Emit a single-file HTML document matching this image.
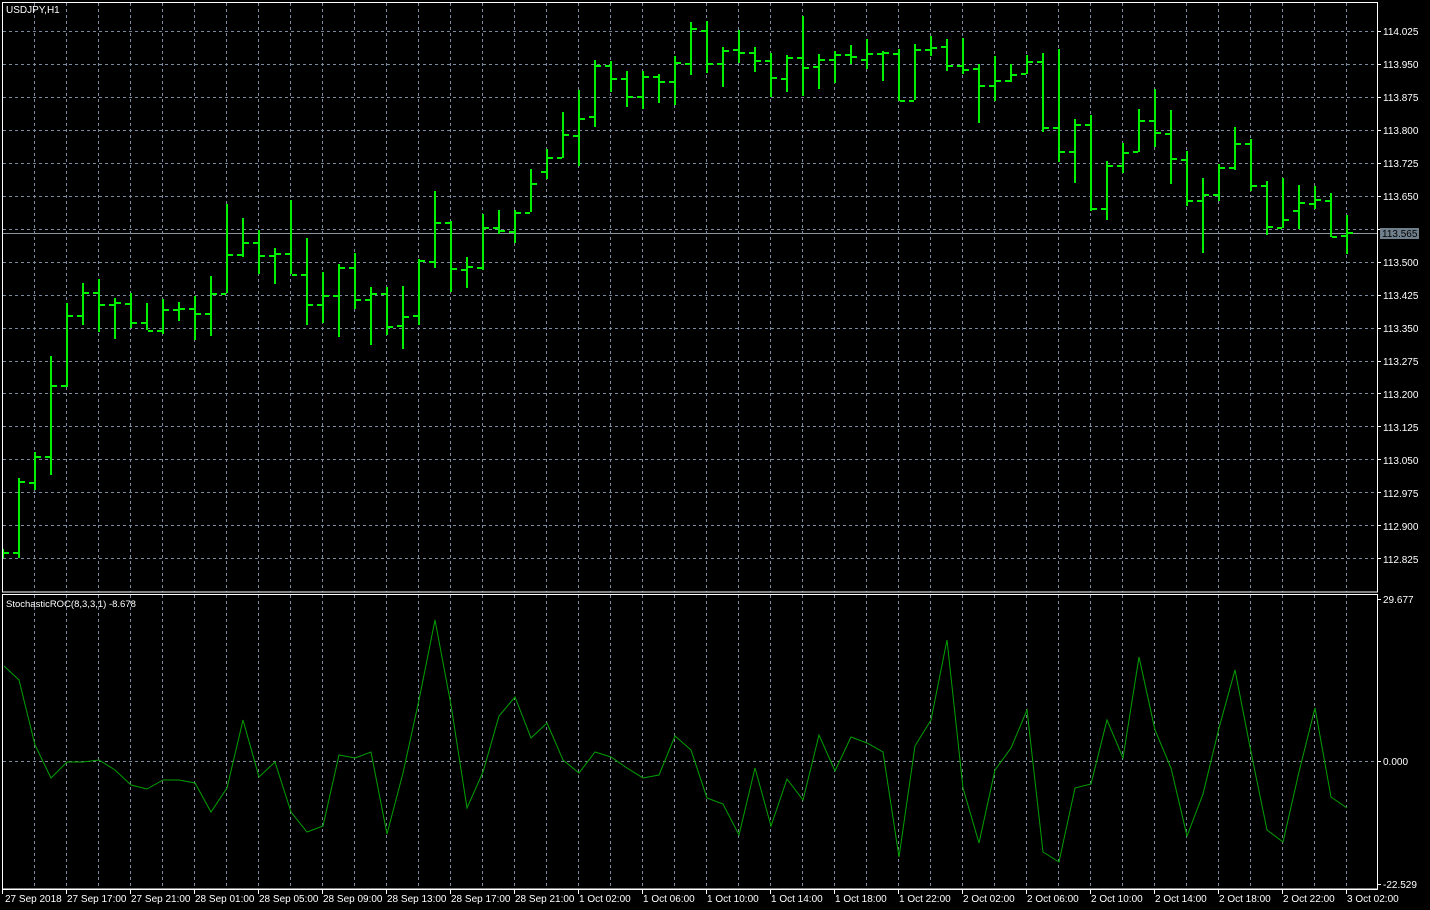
<!DOCTYPE html>
<html><head><meta charset="utf-8"><style>
html,body{margin:0;padding:0;background:#000;width:1430px;height:910px;overflow:hidden}
svg{display:block}
text{font-family:"Liberation Sans",sans-serif;font-size:10px;fill:#fff}
</style></head><body>
<svg id="s" width="1430" height="910" xmlns="http://www.w3.org/2000/svg" shape-rendering="crispEdges">
<g id="grid" stroke="#7b8a9c" stroke-width="1" stroke-dasharray="3,3"></g>
<line x1="2" y1="233.5" x2="1377" y2="233.5" stroke="#8a95a0"/>
<g id="bars" fill="#00f000"></g>
<polyline id="ind" fill="none" stroke="#00a000" stroke-width="1" shape-rendering="auto"/>
<g fill="none" stroke="#fff" stroke-width="1">
<rect x="2.5" y="2.5" width="1375" height="589.5"/>
<rect x="2.5" y="594.5" width="1375" height="294.5"/>
</g>
<g id="ticks" stroke="#fff"></g>
<text x="6" y="13">USDJPY,H1</text>
<text x="6" y="607" style="font-size:9.5px">StochasticROC(8,3,3,1) -8.678</text>
<g>
<text x="1383" y="35">114.025</text><text x="1383" y="68">113.950</text><text x="1383" y="101">113.875</text><text x="1383" y="134">113.800</text><text x="1383" y="167">113.725</text><text x="1383" y="200">113.650</text><text x="1383" y="266">113.500</text><text x="1383" y="299">113.425</text><text x="1383" y="332">113.350</text><text x="1383" y="365">113.275</text><text x="1383" y="398">113.200</text><text x="1383" y="431">113.125</text><text x="1383" y="464">113.050</text><text x="1383" y="497">112.975</text><text x="1383" y="530">112.900</text><text x="1383" y="563">112.825</text>
</g>
<rect x="1380" y="228" width="39" height="11" fill="#707f8c"/>
<text x="1382" y="237" style="fill:#000">113.565</text>
<text x="1383" y="603">29.677</text>
<text x="1383" y="765">0.000</text>
<text x="1383" y="888">-22.529</text>
<g style="font-size:9.5px">
<text x="5" y="902">27 Sep 2018</text><text x="67" y="902">27 Sep 17:00</text><text x="131" y="902">27 Sep 21:00</text><text x="195" y="902">28 Sep 01:00</text><text x="259" y="902">28 Sep 05:00</text><text x="323" y="902">28 Sep 09:00</text><text x="387" y="902">28 Sep 13:00</text><text x="451" y="902">28 Sep 17:00</text><text x="515" y="902">28 Sep 21:00</text><text x="579" y="902">1 Oct 02:00</text><text x="643" y="902">1 Oct 06:00</text><text x="707" y="902">1 Oct 10:00</text><text x="771" y="902">1 Oct 14:00</text><text x="835" y="902">1 Oct 18:00</text><text x="899" y="902">1 Oct 22:00</text><text x="963" y="902">2 Oct 02:00</text><text x="1027" y="902">2 Oct 06:00</text><text x="1091" y="902">2 Oct 10:00</text><text x="1155" y="902">2 Oct 14:00</text><text x="1219" y="902">2 Oct 18:00</text><text x="1283" y="902">2 Oct 22:00</text><text x="1347" y="902">3 Oct 02:00</text>
</g>
</svg>
<script>
var NS="http://www.w3.org/2000/svg";
function el(p,t,a){var e=document.createElementNS(NS,t);for(var k in a)e.setAttribute(k,a[k]);p.appendChild(e);return e;}
var g=document.getElementById('grid');
for(var x=34;x<1377;x+=32){el(g,'line',{x1:x+.5,y1:3,x2:x+.5,y2:592});el(g,'line',{x1:x+.5,y1:595,x2:x+.5,y2:889});}
for(var i=0;i<18;i++){var y=Math.round(31+i*32.95)+.5;if(y>591)break;el(g,'line',{x1:3,y1:y,x2:1377,y2:y});}
el(g,'line',{x1:3,y1:761.5,x2:1377,y2:761.5});
var t=document.getElementById('ticks');
for(var i=0;i<17;i++){var y=Math.round(31+i*32.95)+.5;el(t,'line',{x1:1377,y1:y,x2:1381,y2:y});}
[599.5,761.5,884.5].forEach(function(y){el(t,'line',{x1:1377,y1:y,x2:1381,y2:y});});
el(t,'line',{x1:2,y1:889.5,x2:1378,y2:889.5});
for(var x=2;x<1377;x+=64){el(t,'line',{x1:x+.5,y1:889,x2:x+.5,y2:894});}
// bars: x,high,low,open,close
var B=[[2,549,558,552,552],[18,478,558,552,481],[34,452,490,482,456],[50,356,475,456,385],[66,303,387,385,315],[82,283,325,315,292],[98,279,332,292,304],[114,298,339,304,302],[130,293,328,303,322],[146,303,330,322,330],[162,299,334,330,309],[178,302,321,309,308],[194,296,340,308,313],[210,276,336,313,293],[226,204,293,293,254],[242,218,257,254,242],[258,230,274,242,255],[274,248,284,255,253],[290,200,274,253,274],[306,238,325,274,304],[322,272,323,304,295],[338,264,337,295,267],[354,253,309,267,299],[370,287,345,299,293],[386,287,335,293,326],[402,286,349,325,316],[418,259,325,315,260],[434,191,268,261,222],[450,221,292,222,268],[466,257,288,269,266],[482,214,270,267,227],[498,210,234,227,230],[514,210,243,231,212],[530,169,212,212,183],[546,149,179,171,157],[562,112,158,157,134],[578,90,166,135,118],[594,60,127,116,65],[610,61,92,65,78],[626,71,107,78,96],[642,71,109,96,76],[658,74,103,76,81],[674,56,105,81,62],[690,22,75,63,28],[706,21,73,30,63],[722,47,87,63,50],[738,30,63,49,52],[754,47,72,52,60],[770,53,97,60,77],[786,55,92,78,57],[802,16,96,57,67],[818,54,89,66,59],[834,51,83,59,54],[850,45,64,54,56],[866,39,69,59,53],[882,51,81,53,52],[898,49,101,53,100],[914,44,100,100,49],[930,36,56,49,47],[946,39,71,46,65],[962,38,74,65,69],[978,64,123,68,85],[994,56,101,85,80],[1010,64,82,80,74],[1026,55,74,73,61],[1042,53,132,61,127],[1058,49,162,127,151],[1074,119,183,151,124],[1090,115,211,124,208],[1106,161,220,208,165],[1122,143,173,165,152],[1138,109,152,151,120],[1154,89,147,120,132],[1170,110,184,133,158],[1186,151,206,159,200],[1202,178,253,200,194],[1218,164,201,194,167],[1234,127,170,167,143],[1250,139,191,143,185],[1266,181,235,185,226],[1282,178,228,227,219],[1298,185,229,210,202],[1314,186,209,203,199],[1330,193,237,200,236],[1346,215,254,235,232]];
var bg=document.getElementById('bars');
B.forEach(function(b){var x=b[0];
el(bg,'rect',{x:x,y:b[1],width:2,height:b[2]-b[1]});
if(x>2)el(bg,'rect',{x:x-5,y:b[3],width:5,height:2});
el(bg,'rect',{x:x+2,y:b[4],width:5,height:2});});
var I=[[3,666],[18,680],[34,745],[50,778],[66,762],[82,762],[98,760],[114,770],[130,785],[146,789],[162,780],[178,780],[194,783],[210,812],[226,788],[242,720],[258,777],[274,762],[290,812],[306,832],[322,826],[338,755],[354,758],[370,752],[386,834],[402,773],[418,700],[434,620],[450,705],[466,808],[482,772],[498,716],[514,697],[530,738],[546,723],[562,760],[578,773],[594,752],[610,757],[626,768],[642,778],[658,775],[674,736],[690,750],[706,798],[722,804],[738,835],[754,768],[770,826],[786,779],[802,800],[818,735],[834,771],[850,737],[866,743],[882,752],[898,857],[914,746],[930,720],[946,640],[962,788],[978,843],[994,770],[1010,748],[1026,710],[1042,852],[1058,862],[1074,788],[1090,784],[1106,720],[1122,758],[1138,657],[1154,730],[1170,768],[1186,836],[1202,794],[1218,728],[1234,670],[1250,752],[1266,830],[1282,842],[1298,772],[1314,708],[1330,797],[1346,808]];
document.getElementById('ind').setAttribute('points',I.map(function(p){return (p[0]+1)+','+p[1];}).join(' '));
</script>
</body></html>
